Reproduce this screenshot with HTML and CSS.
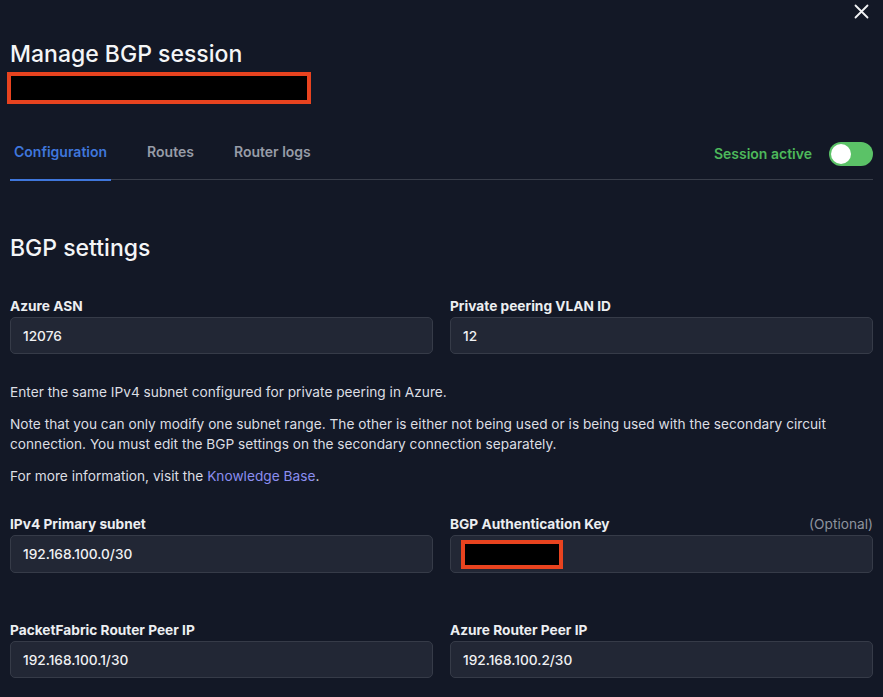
FILE: index.html
```html
<!DOCTYPE html>
<html>
<head>
<meta charset="utf-8">
<link rel="stylesheet" href="styles.css">
</head>
<body>
<div class="panel">
  <div class="topbar">
    <button class="close" aria-label="Close">
      <svg width="15" height="15" viewBox="0 0 15 15"><path d="M1.5 1.5 L13.5 13.5 M13.5 1.5 L1.5 13.5" stroke="#f2f3f5" stroke-width="1.8" stroke-linecap="round"/></svg>
    </button>
  </div>
  <h1 class="title">Manage BGP session</h1>
  <div class="redact redact-title"></div>

  <div class="tabs">
    <div class="tab active">Configuration</div>
    <div class="tab">Routes</div>
    <div class="tab">Router logs</div>
    <div class="session">
      <span class="session-label">Session active</span>
      <span class="toggle"><span class="knob"></span></span>
    </div>
  </div>

  <h2 class="section">BGP settings</h2>

  <div class="grid grid-asn">
    <div class="field">
      <label class="label">Azure ASN</label>
      <div class="input">12076</div>
    </div>
    <div class="field">
      <label class="label">Private peering VLAN ID</label>
      <div class="input">12</div>
    </div>
  </div>

  <div class="notes">
    <p>Enter the same IPv4 subnet configured for private peering in Azure.</p>
    <p>Note that you can only modify one subnet range. The other is either not being used or is being used with the secondary circuit connection. You must edit the BGP settings on the secondary connection separately.</p>
    <p>For more information, visit the <a href="#">Knowledge Base</a>.</p>
  </div>

  <div class="grid grid-subnet">
    <div class="field">
      <label class="label">IPv4 Primary subnet</label>
      <div class="input">192.168.100.0/30</div>
    </div>
    <div class="field">
      <label class="label">BGP Authentication Key <span class="optional">(Optional)</span></label>
      <div class="input input-key"><span class="redact redact-key"></span></div>
    </div>
  </div>

  <div class="grid grid-peer">
    <div class="field">
      <label class="label">PacketFabric Router Peer IP</label>
      <div class="input">192.168.100.1/30</div>
    </div>
    <div class="field">
      <label class="label">Azure Router Peer IP</label>
      <div class="input">192.168.100.2/30</div>
    </div>
  </div>
</div>
</body>
</html>
```

FILE: styles.css
```css
html, body {
  margin: 0;
  padding: 0;
  background: #131826;
}
body {
  font-family: Inter, "Noto Sans", sans-serif;
  color: #eceef1;
  height: 697px;
  overflow: hidden;
}
.panel {
  padding: 0 10px 0 10px;
}
.topbar {
  display: flex;
  justify-content: flex-end;
  height: 24px;
}
.close {
  background: none;
  border: 0;
  padding: 0;
  margin: 4px 4px 0 0;
  width: 15px;
  height: 15px;
  cursor: pointer;
}
.close svg { display: block; }
.title {
  margin: 16px 0 4px 0;
  font-size: 23px;
  line-height: 28px;
  font-weight: 500;
  color: #f4f5f7;
}
.redact {
  display: block;
  background: #000;
  border: 4px solid #e8431f;
  box-sizing: border-box;
}
.redact-title {
  width: 304px;
  height: 32px;
  margin-left: -3px;
}
.tabs {
  display: flex;
  align-items: center;
  margin-top: 24px;
  border-bottom: 1px solid #393e4a;
  height: 52px;
  box-sizing: border-box;
}
.tab {
  font-size: 14px;
  font-weight: 600;
  color: #979ca7;
  padding: 0 4px;
  height: 52px;
  line-height: 48px;
  box-sizing: border-box;
  margin-right: 32px;
}
.tab.active {
  color: #3f76db;
  border-bottom: 2px solid #3f76db;
  margin-bottom: -1px;
  height: 53px;
  line-height: 48px;
}
.session {
  margin-left: auto;
  display: flex;
  align-items: center;
  gap: 17px;
  padding-top: 0;
}
.session-label {
  font-size: 14px;
  font-weight: 600;
  color: #4db85b;
}
.toggle {
  width: 44px;
  height: 24px;
  border-radius: 12px;
  background: #5bc267;
  display: flex;
  align-items: center;
  padding: 2px;
  box-sizing: border-box;
}
.knob {
  width: 20px;
  height: 20px;
  border-radius: 50%;
  background: #fff;
}
.section {
  margin: 54px 0 0 0;
  font-size: 23px;
  line-height: 28px;
  font-weight: 500;
  color: #f4f5f7;
}
.grid {
  display: grid;
  grid-template-columns: 1fr 1fr;
  column-gap: 17px;
}
.grid-asn { margin-top: 36px; }
.field {
  display: flex;
  flex-direction: column;
}
.label {
  display: flex;
  justify-content: space-between;
  font-size: 13.7px;
  line-height: 16px;
  font-weight: 700;
  color: #eceef1;
  margin-bottom: 3px;
}
.optional {
  font-weight: 400;
  color: #8e939e;
}
.input {
  height: 37px;
  box-sizing: border-box;
  background: #222735;
  border: 1px solid #363b48;
  border-radius: 5px;
  padding: 0 12px;
  display: flex;
  align-items: center;
  font-size: 13.7px;
  font-weight: 500;
  color: #f0f1f3;
}
.grid-subnet .input { height: 38px; }
.input-key { padding-left: 10px; }
.redact-key {
  width: 102px;
  height: 29px;
}
.notes {
  margin-top: 28px;
}
.notes p {
  margin: 0 0 12px 0;
  font-size: 13.7px;
  line-height: 20px;
  color: #dcdee3;
}
.notes p:last-child { margin-bottom: 0; }
.notes a {
  color: #8b8ef0;
  text-decoration: none;
}
.grid-subnet { margin-top: 30px; }
.grid-peer { margin-top: 49px; }
```
